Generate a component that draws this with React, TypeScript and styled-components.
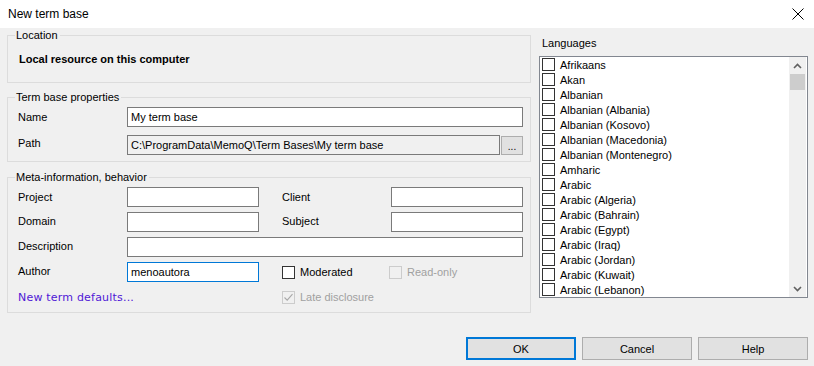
import * as React from 'react'
import styled, { createGlobalStyle } from 'styled-components'

const GlobalStyle = createGlobalStyle`
html, body {
    margin: 0;
    padding: 0;
    background: #f0f0f0;
}
body {
    font-family: "Liberation Sans", Arial, sans-serif;
    font-size: 11px;
    color: #000;
}
`

const Window = styled.div`
width: 814px;
height: 366px;
background: #f0f0f0;
display: flex;
flex-direction: column;
overflow: hidden;
`
const TitleBar = styled.div`
height: 28px;
flex: none;
background: #fff;
display: flex;
align-items: center;
justify-content: space-between;
padding: 0 8px;
font-size: 12px;
`
const CloseBox = styled.div`
width: 16px;
height: 16px;
display: flex;
align-items: center;
justify-content: center;
`
const Body = styled.div`
display: flex;
gap: 8px;
padding: 1px 6px 0 7px;
`
const LeftColumn = styled.div`
width: 524px;
display: flex;
flex-direction: column;
`
const Group = styled.fieldset<{ $gap?: number; $pt?: number; $pb?: number }>`
margin: ${p => p.$gap ?? 0}px 0 0 0;
border: 1px solid #dcdcdc;
padding: ${p => p.$pt ?? 3}px 7px ${p => p.$pb ?? 6}px 10px;
min-width: 0;
`
const Legend = styled.legend`
padding: 0 2px 0 1px;
margin-left: -3px;
line-height: 13px;
font-size: 11px;
`
const BoldText = styled.div`
font-weight: bold;
line-height: 13px;
padding: 1px 0 0 1px;
`
const PropGrid = styled.div`
display: grid;
grid-template-columns: 109px 396px;
grid-auto-rows: 20px;
row-gap: 8px;
align-items: center;
`
const MetaGrid = styled.div`
display: grid;
grid-template-columns: 109px 132px 23px 109px 132px;
grid-auto-rows: 20px;
row-gap: 5px;
align-items: center;
`
const Label = styled.div<{ $col?: number; $shift?: number }>`
grid-column: ${p => p.$col ?? 1};
line-height: 13px;
margin-top: ${p => p.$shift ?? -1}px;
`
const TextBox = styled.div<{ $col?: string; $focused?: boolean; $readOnly?: boolean }>`
grid-column: ${p => p.$col ?? 'auto'};
height: 20px;
box-sizing: border-box;
border: 1px solid ${p => p.$focused ? '#0078d7' : '#7a7a7a'};
background: ${p => p.$readOnly ? '#f0f0f0' : '#fff'};
display: flex;
align-items: center;
padding: 0 3px;
white-space: nowrap;
overflow: hidden;
`
const PathRow = styled.div`
display: flex;
align-items: center;
gap: 1px;
`
const PathBox = styled(TextBox)`
width: 373px;
flex: none;
`
const SmallButton = styled.div`
width: 22px;
height: 19px;
box-sizing: border-box;
border: 1px solid #adadad;
background: #e1e1e1;
display: flex;
align-items: flex-end;
justify-content: center;
padding-bottom: 3px;
font-size: 10px;
line-height: 8px;
`
const CheckRow = styled.div<{ $col: string }>`
grid-column: ${p => p.$col};
display: flex;
align-items: center;
`
const CheckItem = styled.div<{ $width?: number; $disabled?: boolean }>`
display: flex;
align-items: center;
gap: 5px;
width: ${p => p.$width ? p.$width + 'px' : 'auto'};
color: ${p => p.$disabled ? '#a0a0a0' : '#000'};
`
const Box = styled.div<{ $disabled?: boolean }>`
width: 13px;
height: 13px;
box-sizing: border-box;
border: 1px solid ${p => p.$disabled ? '#cccccc' : '#333333'};
background: ${p => p.$disabled ? '#f0f0f0' : '#fff'};
flex: none;
display: flex;
align-items: center;
justify-content: center;
`
const LinkText = styled.div`
grid-column: 1 / span 2;
font-family: "DejaVu Sans", Verdana, sans-serif;
font-size: 11px;
letter-spacing: 0.2px;
color: #4f17d6;
line-height: 13px;
`
const RightColumn = styled.div`
width: 270px;
display: flex;
flex-direction: column;
`
const ListTitle = styled.div`
line-height: 13px;
padding: 8px 0 0 3px;
`
const ListBox = styled.div`
margin-top: 6px;
height: 242px;
box-sizing: border-box;
border: 1px solid #828790;
background: #fff;
display: flex;
`
const ListItems = styled.div`
flex: 1;
padding-left: 2px;
overflow: hidden;
`
const ListRow = styled.div`
height: 15px;
display: flex;
align-items: center;
gap: 5px;
white-space: nowrap;
`
const ScrollBar = styled.div`
width: 17px;
margin-right: 1px;
background: #f0f0f0;
display: flex;
flex-direction: column;
`
const ScrollArrow = styled.div`
height: 17px;
display: flex;
align-items: center;
justify-content: center;
`
const ScrollTrack = styled.div`
flex: 1;
padding: 0 1px;
`
const ScrollThumb = styled.div`
height: 16px;
background: #cdcdcd;
`
const Footer = styled.div`
display: flex;
justify-content: flex-end;
gap: 6px;
padding: 0 6px 0 0;
margin-top: auto;
margin-bottom: 6px;
`
const DialogButton = styled.div<{ $default?: boolean }>`
width: 110px;
height: 23px;
box-sizing: border-box;
border: 1px solid ${p => p.$default ? '#0078d7' : '#adadad'};
box-shadow: ${p => p.$default ? 'inset 0 0 0 1px #0078d7' : 'none'};
background: #e1e1e1;
display: flex;
align-items: center;
justify-content: center;
`

const languages = [
    'Afrikaans', 'Akan', 'Albanian', 'Albanian (Albania)', 'Albanian (Kosovo)',
    'Albanian (Macedonia)', 'Albanian (Montenegro)', 'Amharic', 'Arabic',
    'Arabic (Algeria)', 'Arabic (Bahrain)', 'Arabic (Egypt)', 'Arabic (Iraq)',
    'Arabic (Jordan)', 'Arabic (Kuwait)', 'Arabic (Lebanon)',
]

const Check = () => (
    <svg width="11" height="11" viewBox="0 0 11 11">
        <path d="M1.5 5.5 L4.2 8.2 L9.5 2.2" fill="none" stroke="#a8a8a8" strokeWidth="1.1" />
    </svg>
)

const Chevron = ({ up }: { up?: boolean }) => (
    <svg width="9" height="6" viewBox="0 0 9 6">
        <path d={up ? 'M1 5 L4.5 1.5 L8 5' : 'M1 1 L4.5 4.5 L8 1'} fill="none" stroke="#606060" strokeWidth="1.6" />
    </svg>
)

export default function App() {
    return (
        <Window>
            <GlobalStyle />
            <TitleBar>
                <span>New term base</span>
                <CloseBox>
                    <svg width="12" height="12" viewBox="0 0 12 12">
                        <path d="M0.5 0.5 L11.5 11.5 M11.5 0.5 L0.5 11.5" stroke="#000" strokeWidth="1" />
                    </svg>
                </CloseBox>
            </TitleBar>
            <Body>
                <LeftColumn>
                    <Group $pt={10} $pb={16}>
                        <Legend>Location</Legend>
                        <BoldText>Local resource on this computer</BoldText>
                    </Group>
                    <Group $gap={8} $pt={3} $pb={6}>
                        <Legend>Term base properties</Legend>
                        <PropGrid>
                            <Label $shift={1}>Name</Label>
                            <TextBox>My term base</TextBox>
                            <Label $shift={-3}>Path</Label>
                            <PathRow>
                                <PathBox $readOnly>C:\ProgramData\MemoQ\Term Bases\My term base</PathBox>
                                <SmallButton>...</SmallButton>
                            </PathRow>
                        </PropGrid>
                    </Group>
                    <Group $gap={9} $pt={3} $pb={5}>
                        <Legend>Meta-information, behavior</Legend>
                        <MetaGrid>
                            <Label $shift={1}>Project</Label>
                            <TextBox $col="2" />
                            <Label $col={4} $shift={1}>Client</Label>
                            <TextBox $col="5" />
                            <Label>Domain</Label>
                            <TextBox $col="2" />
                            <Label $col={4}>Subject</Label>
                            <TextBox $col="5" />
                            <Label>Description</Label>
                            <TextBox $col="2 / span 4" />
                            <Label>Author</Label>
                            <TextBox $col="2" $focused>menoautora</TextBox>
                            <CheckRow $col="4 / span 2">
                                <CheckItem $width={107}>
                                    <Box />
                                    <span>Moderated</span>
                                </CheckItem>
                                <CheckItem $disabled>
                                    <Box $disabled />
                                    <span>Read-only</span>
                                </CheckItem>
                            </CheckRow>
                            <LinkText>New term defaults...</LinkText>
                            <CheckRow $col="4 / span 2">
                                <CheckItem $disabled>
                                    <Box $disabled><Check /></Box>
                                    <span>Late disclosure</span>
                                </CheckItem>
                            </CheckRow>
                        </MetaGrid>
                    </Group>
                </LeftColumn>
                <RightColumn>
                    <ListTitle>Languages</ListTitle>
                    <ListBox>
                        <ListItems>
                            {languages.map(lang => (
                                <ListRow key={lang}>
                                    <Box />
                                    <span>{lang}</span>
                                </ListRow>
                            ))}
                        </ListItems>
                        <ScrollBar>
                            <ScrollArrow><Chevron up /></ScrollArrow>
                            <ScrollTrack><ScrollThumb /></ScrollTrack>
                            <ScrollArrow><Chevron /></ScrollArrow>
                        </ScrollBar>
                    </ListBox>
                </RightColumn>
            </Body>
            <Footer>
                <DialogButton $default>OK</DialogButton>
                <DialogButton>Cancel</DialogButton>
                <DialogButton>Help</DialogButton>
            </Footer>
        </Window>
    )
}
